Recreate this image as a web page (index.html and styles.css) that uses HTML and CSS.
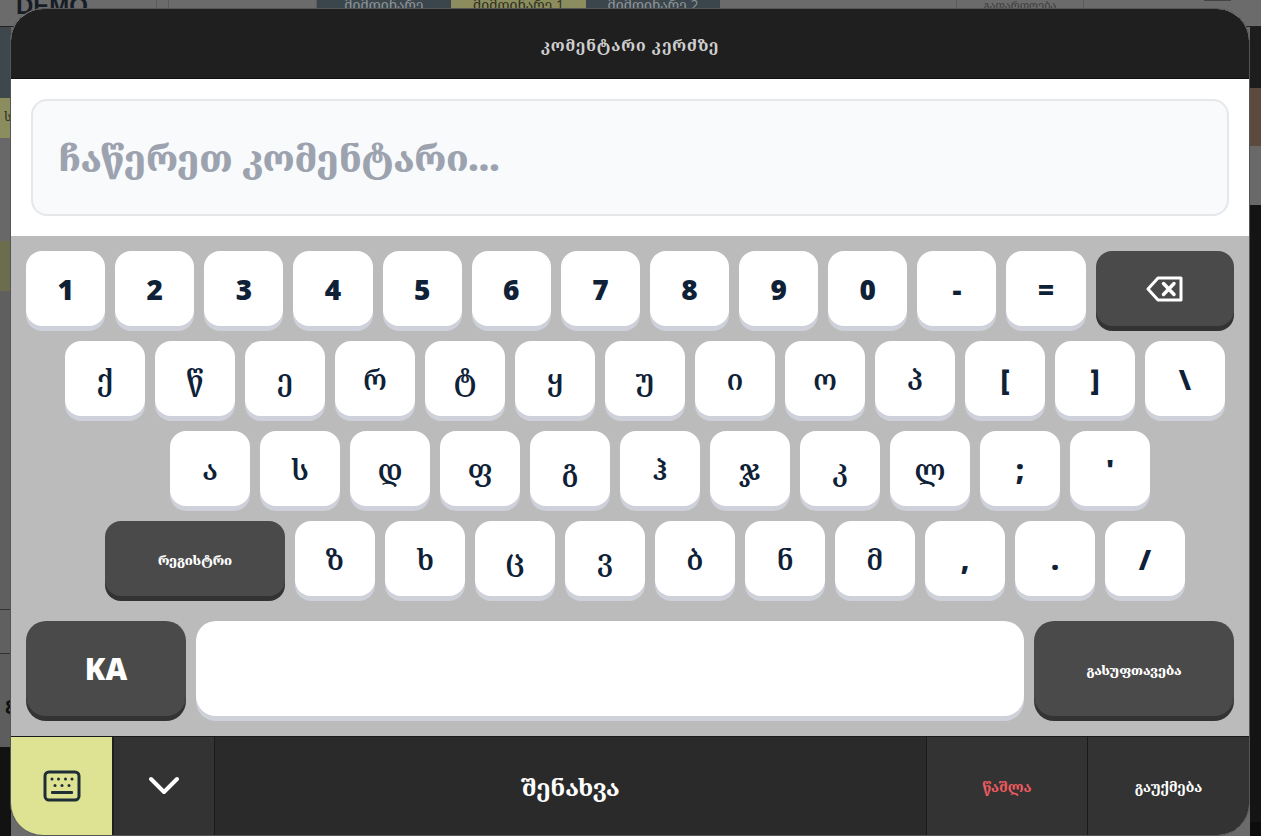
FILE: index.html
```html
<!DOCTYPE html>
<html lang="ka">
<head>
    <meta charset="UTF-8">
    <meta name="viewport" content="width=device-width, initial-scale=1.0">
    <title>კომენტარი კერძზე</title>
    <link rel="stylesheet" href="styles.css">
</head>
<body>
    <!-- dimmed page behind the dialog -->
    <div class="backdrop">
        <div class="bg-top">
            <span class="bg-logo">DEMO</span>
            <span class="bg-cell"></span>
            <span class="bg-tab bg-tab-dark">მიმდინარე</span>
            <span class="bg-tab bg-tab-yellow">მიმდინარე 1</span>
            <span class="bg-tab bg-tab-dark">მიმდინარე 2</span>
            <span class="bg-action">გაფართოება</span>
            <span class="bg-mark"></span>
        </div>
        <div class="bg-main">
            <div class="bg-col">
                <div class="seg seg-slate"></div>
                <div class="seg seg-olive"><span class="seg-letter">ს</span></div>
                <div class="seg seg-gray-a"></div>
                <div class="seg seg-olive-dim"></div>
                <div class="seg seg-gray-b"></div>
                <div class="seg seg-gray-c"></div>
                <div class="seg seg-gray-d"><span class="seg-num">8</span></div>
                <div class="seg seg-black"></div>
            </div>
            <div class="bg-col">
                <div class="seg seg-r-dark"></div>
                <div class="seg seg-r-photo"></div>
                <div class="seg seg-r-gray"></div>
                <div class="seg seg-r-black"></div>
                <div class="seg seg-r-foot"></div>
            </div>
        </div>
    </div>

    <div class="modal">
        <div class="modal-header">კომენტარი კერძზე</div>
        <div class="input-wrap">
            <div class="comment-input"><span class="placeholder">ჩაწერეთ კომენტარი...</span></div>
        </div>
        <div class="keyboard">
            <div class="kb-row kb-row-num">
                <button class="key">1</button>
                <button class="key">2</button>
                <button class="key">3</button>
                <button class="key">4</button>
                <button class="key">5</button>
                <button class="key">6</button>
                <button class="key">7</button>
                <button class="key">8</button>
                <button class="key">9</button>
                <button class="key">0</button>
                <button class="key">-</button>
                <button class="key">=</button>
                <button class="key key-dark key-back">
                    <svg width="38" height="26" viewBox="0 0 38 26" fill="none" stroke="#fff" stroke-width="3" stroke-linejoin="round" stroke-linecap="round">
                        <path d="M12 2 H35 V24 H12 L2 13 Z"/>
                        <path d="M17.500 7.500 L28 18.500 M28 7.500 L17.500 18.500" stroke-width="3.500"/>
                    </svg>
                </button>
            </div>
            <div class="kb-row kb-row-shift1">
                <button class="key key-ka">ქ</button>
                <button class="key key-ka">წ</button>
                <button class="key key-ka">ე</button>
                <button class="key key-ka">რ</button>
                <button class="key key-ka">ტ</button>
                <button class="key key-ka">ყ</button>
                <button class="key key-ka">უ</button>
                <button class="key key-ka">ი</button>
                <button class="key key-ka">ო</button>
                <button class="key key-ka">პ</button>
                <button class="key">[</button>
                <button class="key">]</button>
                <button class="key">\</button>
            </div>
            <div class="kb-row kb-row-shift2">
                <button class="key key-ka">ა</button>
                <button class="key key-ka">ს</button>
                <button class="key key-ka">დ</button>
                <button class="key key-ka">ფ</button>
                <button class="key key-ka">გ</button>
                <button class="key key-ka">ჰ</button>
                <button class="key key-ka">ჯ</button>
                <button class="key key-ka">კ</button>
                <button class="key key-ka">ლ</button>
                <button class="key">;</button>
                <button class="key">'</button>
            </div>
            <div class="kb-row kb-row-shift1">
                <button class="key key-dark key-shift">რეგისტრი</button>
                <button class="key key-ka">ზ</button>
                <button class="key key-ka">ხ</button>
                <button class="key key-ka">ც</button>
                <button class="key key-ka">ვ</button>
                <button class="key key-ka">ბ</button>
                <button class="key key-ka">ნ</button>
                <button class="key key-ka">მ</button>
                <button class="key">,</button>
                <button class="key">.</button>
                <button class="key">/</button>
            </div>
            <div class="kb-row kb-row-last">
                <button class="key key-dark key-lang">KA</button>
                <button class="key key-space"></button>
                <button class="key key-dark key-clear">გასუფთავება</button>
            </div>
        </div>
        <div class="modal-footer">
            <button class="foot-btn foot-kbd">
                <svg width="38" height="32" viewBox="0 0 38 32" fill="none">
                    <rect x="2" y="2" width="34" height="28" rx="4" stroke="#1f2d36" stroke-width="3"/>
                    <g fill="#1f2d36">
                        <circle cx="9" cy="9" r="1.500"/><circle cx="15.500" cy="9" r="1.500"/><circle cx="22.500" cy="9" r="1.500"/><circle cx="29" cy="9" r="1.500"/>
                        <circle cx="12" cy="15.500" r="1.500"/><circle cx="19" cy="15.500" r="1.500"/><circle cx="26" cy="15.500" r="1.500"/>
                        <rect x="8" y="21" width="22" height="3" rx="1"/>
                    </g>
                </svg>
            </button>
            <button class="foot-btn foot-chevron">
                <svg width="32" height="20" viewBox="0 0 32 20" fill="none" stroke="#fff" stroke-width="4" stroke-linecap="round" stroke-linejoin="round">
                    <path d="M3 3 L16 16 L29 3"/>
                </svg>
            </button>
            <button class="foot-btn foot-save">შენახვა</button>
            <button class="foot-btn foot-small foot-delete">წაშლა</button>
            <button class="foot-btn foot-small foot-cancel">გაუქმება</button>
        </div>
    </div>
</body>
</html>
```

FILE: styles.css
```css
* {
    box-sizing: border-box;
}

body {
    margin: 0;
    height: 836px;
    overflow: hidden;
    background: #666;
    font-family: "Open Sans", "Noto Serif Georgian", "DejaVu Serif", sans-serif;
    position: relative;
}

button {
    font-family: inherit;
    border: none;
    padding: 0;
}

.backdrop {
    height: 836px;
    display: flex;
    flex-direction: column;
    background: #6b6b6b;
}

.bg-top {
    display: flex;
    height: 27px;
    flex-shrink: 0;
    background: #6b6b6b;
    border-bottom: 1px solid #222;
    overflow: hidden;
    color: #1a2530;
}

.bg-logo {
    width: 157px;
    padding-left: 16px;
    font: bold 24px/11px "Liberation Sans", sans-serif;
    color: #161d26;
    border-right: 1px solid #5c5c5c;
}

.bg-cell {
    width: 149px;
    margin-left: 11px;
    border-left: 1px solid #5c5c5c;
    border-right: 1px solid #5c5c5c;
}

.bg-tab {
    width: 134px;
    height: 9px;
    font-size: 14px;
    line-height: 9px;
    text-align: center;
}

.bg-tab-dark {
    background: #3a464c;
    color: #8e9599;
}

.bg-tab-yellow {
    width: 135px;
    background: #8b8d5f;
    color: #2e3020;
}

.bg-action {
    width: 128px;
    margin-left: 236px;
    height: 27px;
    font-size: 11px;
    line-height: 9px;
    text-align: center;
    color: #3b3b3b;
    border-left: 1px solid #5c5c5c;
    border-right: 1px solid #5c5c5c;
}

.bg-mark {
    width: 27px;
    height: 1px;
    margin-left: 120px;
    background: #444;
}

.bg-main {
    flex: 1;
    display: flex;
    justify-content: space-between;
}

.bg-col {
    width: 11px;
    display: flex;
    flex-direction: column;
    overflow: hidden;
}

.seg-slate { height: 71px; background: #3e474c; }
.seg-olive { height: 40px; background: #8b8d5f; }
.seg-gray-a { height: 103px; background: #686868; }
.seg-olive-dim { height: 50px; background: #6c6d4d; }
.seg-gray-b { height: 319px; background: #5f5f5f; border-bottom: 1px solid #333; }
.seg-gray-c { height: 44px; background: #606060; border-bottom: 1px solid #333; }
.seg-gray-d { height: 93px; background: #5d5d5d; }
.seg-black { flex: 1; background: #121212; }

.seg-letter {
    display: block;
    padding: 11px 0 0 4px;
    font-size: 12px;
    line-height: 16px;
    color: #2b2b20;
}

.seg-num {
    display: block;
    padding: 42px 0 0 5px;
    font: bold 20px/22px "Open Sans", sans-serif;
    color: #111;
}

.seg-r-dark { height: 61px; background: #1d1d1d; }
.seg-r-photo { height: 58px; background: #5c4a3e; }
.seg-r-gray { height: 59px; background: #696969; }
.seg-r-black { height: 617px; background: #141414; }
.seg-r-foot { flex: 1; background: #0c0c0c; }

/* dialog */
.modal {
    position: absolute;
    left: 10px;
    top: 8px;
    width: 1240px;
    height: 828px;
    border: 1px solid #555;
    border-radius: 33px;
    overflow: hidden;
    display: flex;
    flex-direction: column;
    background: #fff;
}

.modal-header {
    height: 70px;
    flex-shrink: 0;
    padding-top: 3px;
    background: #1f1f1f;
    border-bottom: 1px solid #111;
    color: #cfcfcf;
    font-size: 16px;
    font-weight: 700;
    letter-spacing: 0.9px;
    display: flex;
    align-items: center;
    justify-content: center;
}

.input-wrap {
    height: 157px;
    flex-shrink: 0;
    padding: 20px;
}

.comment-input {
    height: 117px;
    background: #f8fafc;
    border: 2px solid #e5e7eb;
    border-radius: 16px;
    padding: 0 25px;
    display: flex;
    align-items: center;
}

.placeholder {
    display: block;
    height: 44px;
    overflow: hidden;
    color: #9ca3af;
    font-size: 36px;
    font-weight: 800;
    line-height: 44px;
}

.keyboard {
    height: 500px;
    flex-shrink: 0;
    background: #bbb;
    padding: 15px;
    display: flex;
    flex-direction: column;
    gap: 15px;
}

.kb-row {
    display: flex;
    justify-content: center;
    gap: 10px;
    height: 75px;
}

.kb-row-shift1 {
    padding-left: 30px;
}

.kb-row-shift2 {
    padding-left: 60px;
}

.kb-row-last {
    height: 95px;
    margin-top: 10px;
}

.key {
    width: 80px;
    height: 100%;
    background: #fff;
    color: #0f2137;
    border-radius: 16px;
    box-shadow: 0 5px 0 #ced1da;
    font-size: 28px;
    font-weight: 800;
    display: flex;
    align-items: center;
    justify-content: center;
}

.key-ka {
    font-weight: 600;
}

.kb-row-num .key {
    flex: 1;
    width: auto;
}

.kb-row-num .key-back {
    flex: 1.75;
}

.key-dark {
    background: #4a4a4a;
    box-shadow: 0 5px 0 #333;
    color: #fff;
}

.key-shift {
    width: 180px;
    padding-top: 2px;
    font-size: 13px;
}

.key-lang {
    width: 160px;
    font-size: 30px;
    font-weight: 800;
}

.key-space {
    width: auto;
    flex: 1;
}

.key-clear {
    width: 200px;
    padding-top: 2px;
    font-size: 13px;
}

.kb-row-last .key {
    border-radius: 20px;
}

.modal-footer {
    flex: 1;
    display: flex;
    background: #2a2a2a;
    border-top: 1px solid #1a1a1a;
}

.foot-btn {
    height: 100%;
    color: #fff;
    display: flex;
    align-items: center;
    justify-content: center;
    border-right: 1px solid #1a1a1a;
    background: #333;
}

.foot-kbd {
    width: 103px;
    background: #dde392;
    border-right: 2px solid #1f1f1f;
}

.foot-chevron {
    width: 101px;
}

.foot-save {
    flex: 1;
    background: #2a2a2a;
    font-size: 24px;
    font-weight: 700;
}

.foot-small {
    width: 161px;
    font-size: 14px;
    font-weight: 700;
}

.foot-delete {
    color: #ef5a5f;
}

.foot-cancel {
    border-right: none;
}
```
